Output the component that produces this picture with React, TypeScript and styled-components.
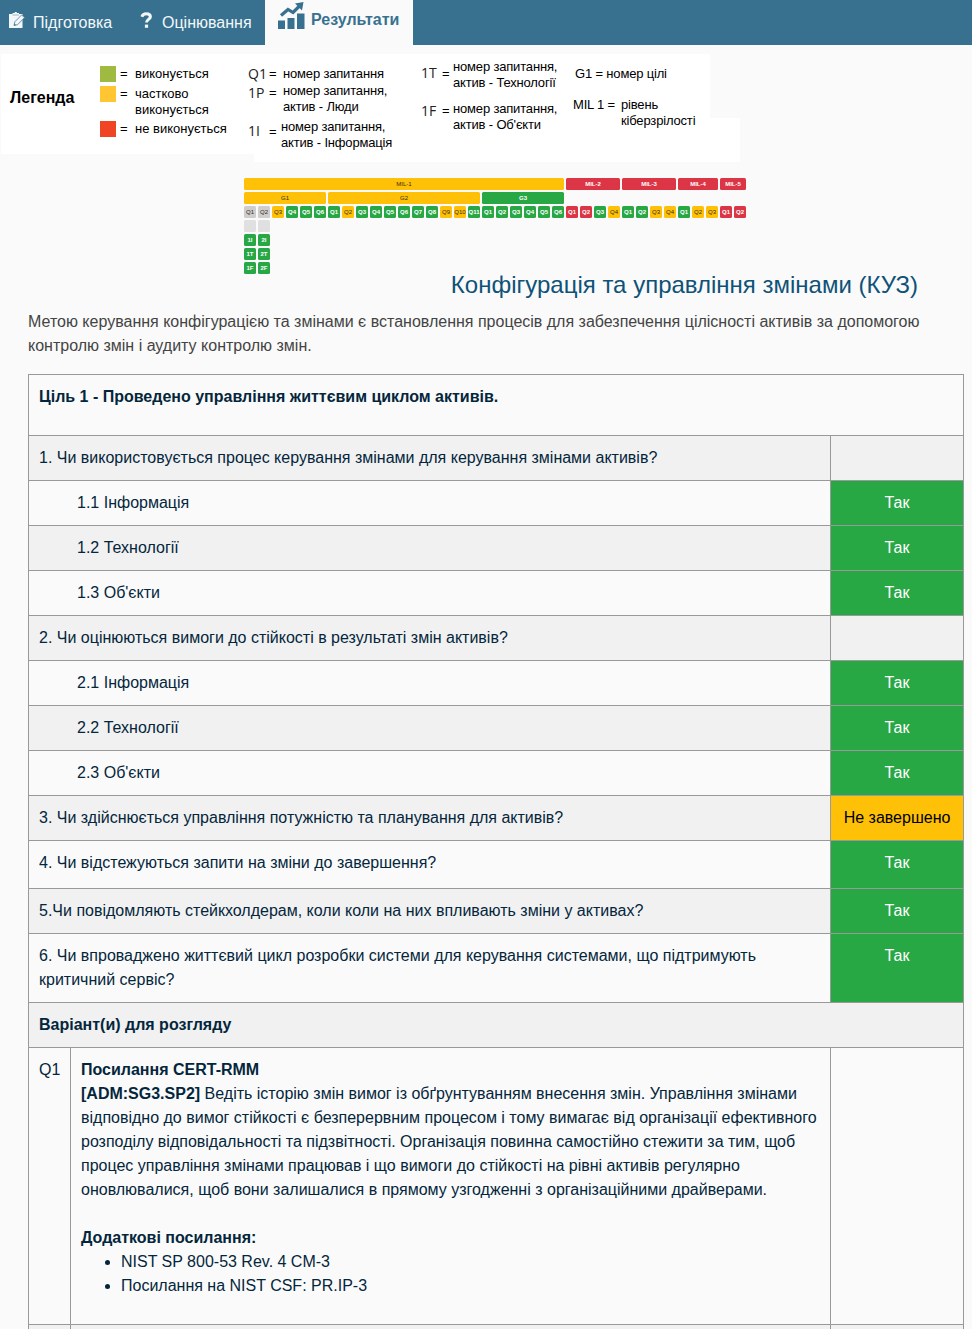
import React from "react";
import styled, { createGlobalStyle } from "styled-components";

const GlobalStyle = createGlobalStyle`
  * { box-sizing: border-box; }
  html { background: #fafafa; overflow: hidden; }
  body { margin: 0; height: 1329px; overflow: hidden; background: #fafafa; color: #04263c; font: 16px/24px "Liberation Sans", Arial, sans-serif; }
`;

const colors = { yellow: "#ffc107", green: "#28a745", red: "#dc3545", gray: "#cfcdcd", blank: "#e0e0e0" };
type Tone = keyof typeof colors;

const NavBar = styled.nav`
  display: flex;
  height: 45px;
  background: #38718f;
`;

const Tab = styled.a<{ $width: number; $left: number; $active?: boolean }>`
  display: flex;
  align-items: center;
  width: ${(p) => p.$width}px;
  padding: 0 0 ${(p) => (p.$active ? 6 : 0)}px ${(p) => p.$left}px;
  background: ${(p) => (p.$active ? "#fafafa" : "transparent")};
  color: ${(p) => (p.$active ? "#38718f" : "#f3f7f9")};
  font-weight: ${(p) => (p.$active ? 700 : 400)};
  white-space: nowrap;
`;

const TabIcon = styled.span<{ $gap: number; $lift?: number }>`
  display: flex;
  margin-right: ${(p) => p.$gap}px;
  padding-bottom: ${(p) => p.$lift ?? 0}px;
`;

const Legend = styled.section`
  display: flex;
  width: 739px;
  height: 108px;
  margin: 9px 0 0 1px;
  color: #000;
  font-size: 13px;
  line-height: 16px;
  white-space: nowrap;
  background:
    linear-gradient(#fff, #fff) 0 0 / 709px 64px no-repeat,
    linear-gradient(#fff, #fff) 0 64px / 253px 36px no-repeat,
    linear-gradient(#fff, #fff) 253px 64px / 486px 44px no-repeat;
`;

const LegendTitle = styled.h2`
  width: 99px;
  margin: 0;
  padding: 32px 0 0 9px;
  font-size: 16px;
  line-height: 24px;
`;

const LegendColumn = styled.div<{ $width: number; $top: number; $tight?: boolean }>`
  display: flex;
  flex-direction: column;
  width: ${(p) => p.$width}px;
  padding-top: ${(p) => p.$top}px;
  letter-spacing: ${(p) => (p.$tight ? "-0.17px" : "normal")};
`;

const LegendItem = styled.div<{ $height: number; $indent?: number }>`
  display: flex;
  height: ${(p) => p.$height}px;
  padding-left: ${(p) => p.$indent ?? 0}px;
`;

const Swatch = styled.span<{ $color: string }>`
  width: 16px;
  height: 16px;
  margin-right: 4px;
  background: ${(p) => p.$color};
`;

const Equals = styled.span<{ $width: number; $drop?: number }>`
  width: ${(p) => p.$width}px;
  padding-top: ${(p) => p.$drop ?? 0}px;
`;

const Code = styled.span<{ $width: number; $drop?: number }>`
  width: ${(p) => p.$width}px;
  padding-top: ${(p) => p.$drop ?? 0}px;
  color: #222;
  font-family: "Open Sans", sans-serif;
  font-size: 14px;
  letter-spacing: normal;
`;

const HeatMap = styled.section`
  display: flex;
  gap: 2px;
  height: 92px;
  margin: 16px 0 0 244px;
`;

const Group = styled.div`
  display: flex;
  flex-direction: column;
  gap: 2px;
`;

const GroupRow = styled.div`
  display: flex;
  align-items: flex-start;
  gap: 2px;
`;

const Tile = styled.span<{ $tone: Tone; $wide?: boolean }>`
  display: flex;
  align-items: center;
  justify-content: center;
  width: ${(p) => (p.$wide ? "100%" : "12px")};
  height: 12px;
  flex-shrink: 0;
  border-radius: 1.5px;
  background: ${(p) => colors[p.$tone]};
  color: ${(p) => (p.$tone === "green" || p.$tone === "red" ? "#fff" : "#332b12")};
  font-size: 6px;
  line-height: 12px;
  font-weight: ${(p) => (p.$tone === "green" || p.$tone === "red" ? 700 : 400)};
  white-space: nowrap;
`;

const TileGap = styled.div`
  height: 12px;
`;

const PageTitle = styled.h1`
  margin: 0;
  padding-right: 54px;
  color: #0f5278;
  font-size: 24px;
  line-height: 30px;
  font-weight: 400;
  text-align: right;
`;

const Intro = styled.p`
  margin: 10px 0 16px 28px;
  color: #444;
  white-space: nowrap;
`;

const Table = styled.div`
  width: 936px;
  margin-left: 28px;
  border: solid #999;
  border-width: 1px 0 0 1px;
`;

const Row = styled.div<{ $height?: number; $striped?: boolean }>`
  display: flex;
  height: ${(p) => p.$height ?? 45}px;
  background: ${(p) => (p.$striped ? "#f1f1f1" : "#fafafa")};
`;

const Cell = styled.div<{ $width?: number; $indent?: number; $bold?: boolean }>`
  flex: ${(p) => (p.$width ? `0 0 ${p.$width}px` : "1")};
  padding: 10px 0 0 ${(p) => p.$indent ?? 10}px;
  border: solid #999;
  border-width: 0 1px 1px 0;
  font-weight: ${(p) => (p.$bold ? 700 : 400)};
  white-space: nowrap;
`;

const Answer = styled(Cell)<{ $tone?: Tone }>`
  flex: 0 0 133px;
  padding-left: 0;
  text-align: center;
  color: ${(p) => (p.$tone === "green" ? "#fff" : "#000")};
  background: ${(p) => (p.$tone ? colors[p.$tone] : "transparent")};
`;

const References = styled.ul`
  margin: 0;
  padding-left: 40px;
`;

const g = "green", y = "yellow", r = "red", n = "gray";

function Tiles({ tones }: { tones: Tone[] }) {
  return (
    <GroupRow>
      {tones.map((tone, i) => (
        <Group key={i}>
          <Tile $tone={tone}>Q{i + 1}</Tile>
          {tone === "gray" && (
            <>
              <Tile $tone="blank" />
              {["I", "T", "F"].map((s) => <Tile key={s} $tone="green">{i + 1}{s}</Tile>)}
            </>
          )}
        </Group>
      ))}
    </GroupRow>
  );
}

const goals: { name: string; tone: Tone; tones: Tone[] }[] = [
  { name: "G1", tone: y, tones: [n, n, y, g, g, g] },
  { name: "G2", tone: y, tones: [g, y, g, g, g, g, g, g, y, y, g] },
  { name: "G3", tone: g, tones: [g, g, g, g, g, g] },
];

const levels: { name: string; tones: Tone[] }[] = [
  { name: "MIL-2", tones: [r, r, g, y] },
  { name: "MIL-3", tones: [g, g, y, y] },
  { name: "MIL-4", tones: [g, y, y] },
  { name: "MIL-5", tones: [r, r] },
];

const questions: { text: React.ReactNode; sub?: boolean; answer?: string; height?: number }[] = [
  { text: "1. Чи використовується процес керування змінами для керування змінами активів?" },
  { text: "1.1 Інформація", sub: true, answer: "Так" },
  { text: "1.2 Технології", sub: true, answer: "Так" },
  { text: "1.3 Об'єкти", sub: true, answer: "Так" },
  { text: "2. Чи оцінюються вимоги до стійкості в результаті змін активів?" },
  { text: "2.1 Інформація", sub: true, answer: "Так" },
  { text: "2.2 Технології", sub: true, answer: "Так" },
  { text: "2.3 Об'єкти", sub: true, answer: "Так" },
  { text: "3. Чи здійснюється управління потужністю та планування для активів?", answer: "Не завершено" },
  { text: "4. Чи відстежуються запити на зміни до завершення?", answer: "Так", height: 48 },
  { text: "5.Чи повідомляють стейкхолдерам, коли коли на них впливають зміни у активах?", answer: "Так" },
  {
    text: <>6. Чи впроваджено життєвий цикл розробки системи для керування системами, що підтримують<br />критичний сервіс?</>,
    answer: "Так",
    height: 69,
  },
];

function ClipboardIcon() {
  return (
    <svg width="16" height="17" viewBox="0 0 16 17">
      <path d="M0 2h3.500V1h2L6 0h1.500L8 1h2v1h3.500v14H0z" fill="#f3f7f9" />
      <path d="M3.500 3h6.500" stroke="#9bb8c7" />
      <path d="M5 13.500l.8-3.700L12.600 3l2.900 2.600-6.800 7z" fill="#f3f7f9" stroke="#5b8aa3" strokeWidth=".9" />
      <path d="M5 13.500l.5-2 1.500 1.500z" fill="#38718f" />
    </svg>
  );
}

function QuestionIcon() {
  return (
    <svg width="13" height="17" viewBox="0 0 13 17">
      <path d="M1.800 4.800C2.600 2.700 4.200 1.700 6.200 1.700c2.400 0 4.200 1.200 4.200 3.100 0 2.500-3.900 2.700-3.900 5.700" fill="none" stroke="#f3f7f9" strokeWidth="3" />
      <path d="M4.900 12.600h3.200v3.200H4.900z" fill="#f3f7f9" />
    </svg>
  );
}

function ChartIcon() {
  return (
    <svg width="27" height="27" viewBox="0 0 27 27" fill="#38718f">
      <path d="M0 18.500h7V27H0zM9.500 16h7v11h-7zM19 11.500h7.500V27H19z" />
      <path d="M3 13.500l7-6 5 3L22 3.500" fill="none" stroke="#38718f" strokeWidth="3.200" />
      <path d="M17 1.500L25.500 0 24 8.500z" />
    </svg>
  );
}

export default function App() {
  return (
    <>
      <GlobalStyle />
      <NavBar>
        <Tab $width={132} $left={9}>
          <TabIcon $gap={8} $lift={4}><ClipboardIcon /></TabIcon>Підготовка
        </Tab>
        <Tab $width={133} $left={8}>
          <TabIcon $gap={9} $lift={4}><QuestionIcon /></TabIcon>Оцінювання
        </Tab>
        <Tab $width={148} $left={13} $active>
          <TabIcon $gap={6} $lift={8}><ChartIcon /></TabIcon>Результати
        </Tab>
      </NavBar>

      <Legend>
        <LegendTitle>Легенда</LegendTitle>
        <LegendColumn $width={148} $top={12}>
          <LegendItem $height={20}><Swatch $color="#a0b940" /><Equals $width={15}>=</Equals>виконується</LegendItem>
          <LegendItem $height={35}><Swatch $color="#ffc532" /><Equals $width={15}>=</Equals><span>частково<br />виконується</span></LegendItem>
          <LegendItem $height={16}><Swatch $color="#f04525" /><Equals $width={15}>=</Equals>не виконується</LegendItem>
        </LegendColumn>
        <LegendColumn $width={173} $top={12} $tight>
          <LegendItem $height={17}><Code $width={21}>Q1</Code><Equals $width={14}>=</Equals>номер запитання</LegendItem>
          <LegendItem $height={36}><Code $width={21} $drop={2}>1P</Code><Equals $width={14} $drop={2}>=</Equals><span>номер запитання,<br />актив - Люди</span></LegendItem>
          <LegendItem $height={32}><Code $width={21} $drop={4}>1I</Code><Equals $width={12} $drop={5}>=</Equals><span>номер запитання,<br />актив - Інформація</span></LegendItem>
        </LegendColumn>
        <LegendColumn $width={151} $top={5} $tight>
          <LegendItem $height={42}><Code $width={21} $drop={6}>1T</Code><Equals $width={11} $drop={7}>=</Equals><span>номер запитання,<br />актив - Технології</span></LegendItem>
          <LegendItem $height={32}><Code $width={21} $drop={2}>1F</Code><Equals $width={11} $drop={2}>=</Equals><span>номер запитання,<br />актив - Об'єкти</span></LegendItem>
        </LegendColumn>
        <LegendColumn $width={160} $top={12} $tight>
          <LegendItem $height={31} $indent={3}>G1 = номер цілі</LegendItem>
          <LegendItem $height={32} $indent={1}><Equals $width={48}>MIL 1 =</Equals><span>рівень<br />кіберзрілості</span></LegendItem>
        </LegendColumn>
      </Legend>

      <HeatMap>
        <Group>
          <Tile $tone="yellow" $wide>MIL-1</Tile>
          <GroupRow>
            {goals.map((goal) => (
              <Group key={goal.name}>
                <Tile $tone={goal.tone} $wide>{goal.name}</Tile>
                <Tiles tones={goal.tones} />
              </Group>
            ))}
          </GroupRow>
        </Group>
        {levels.map((level) => (
          <Group key={level.name}>
            <Tile $tone="red" $wide>{level.name}</Tile>
            <TileGap />
            <Tiles tones={level.tones} />
          </Group>
        ))}
      </HeatMap>

      <PageTitle>Конфігурація та управління змінами (КУЗ)</PageTitle>
      <Intro>
        Метою керування конфігурацією та змінами є встановлення процесів для забезпечення цілісності активів за допомогою<br />
        контролю змін і аудиту контролю змін.
      </Intro>

      <Table>
        <Row $height={61}><Cell $bold>Ціль 1 - Проведено управління життєвим циклом активів.</Cell></Row>
        {questions.map((q, i) => (
          <Row key={i} $striped={i % 2 === 0} $height={q.height}>
            <Cell $indent={q.sub ? 48 : 10}>{q.text}</Cell>
            <Answer $tone={q.answer === "Так" ? "green" : q.answer ? "yellow" : undefined}>{q.answer}</Answer>
          </Row>
        ))}
        <Row $striped><Cell $bold>Варіант(и) для розгляду</Cell></Row>
        <Row $height={277}>
          <Cell $width={42}>Q1</Cell>
          <Cell>
            <b>Посилання CERT-RMM</b><br />
            <b>[ADM:SG3.SP2]</b> Ведіть історію змін вимог із обґрунтуванням внесення змін. Управління змінами<br />
            відповідно до вимог стійкості є безперервним процесом і тому вимагає від організації ефективного<br />
            розподілу відповідальності та підзвітності. Організація повинна самостійно стежити за тим, щоб<br />
            процес управління змінами працював і що вимоги до стійкості на рівні активів регулярно<br />
            оновлювалися, щоб вони залишалися в прямому узгодженні з організаційними драйверами.<br />
            <br />
            <b>Додаткові посилання:</b>
            <References>
              <li>NIST SP 800-53 Rev. 4 CM-3</li>
              <li>Посилання на NIST CSF: PR.IP-3</li>
            </References>
          </Cell>
          <Answer />
        </Row>
        <Row $striped><Cell $width={42} /><Cell /><Answer /></Row>
      </Table>
    </>
  );
}
